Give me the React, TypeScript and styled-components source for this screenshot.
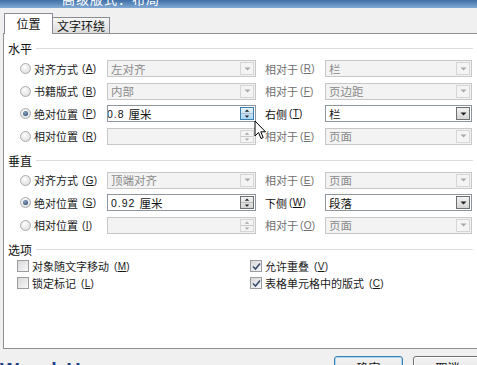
import React from "react";
import styled, { createGlobalStyle, css } from "styled-components";

const GlobalStyle = createGlobalStyle`
  html, body {
    margin: 0;
    padding: 0;
    background: #f0f0f0;
  }
  body {
    font-family: "Noto Sans CJK SC", "Liberation Sans", sans-serif;
    font-size: 11px;
    color: #1e1e1e;
  }
`;

const Window = styled.div`
  position: relative;
  width: 477px;
  height: 365px;
  overflow: hidden;
  background: #f0f0f0;
  display: flex;
  flex-direction: column;
`;

const TitleBar = styled.div`
  flex: none;
  height: 8px;
  overflow: hidden;
  background: linear-gradient(#3f6fa6, #80a9d4);
`;

const TitleText = styled.div`
  margin-top: -9px;
  padding-left: 62px;
  color: #fff;
  font-size: 13px;
  line-height: 16px;
  letter-spacing: 1px;
`;

const TabStrip = styled.div`
  flex: none;
  height: 25px;
  display: flex;
  align-items: flex-end;
  padding-left: 4px;
`;

const Tab = styled.div<{ $active?: boolean }>`
  box-sizing: border-box;
  display: flex;
  align-items: center;
  justify-content: center;
  border: 1px solid #898c95;
  border-bottom: none;
  font-size: 12px;
  color: #111;
  ${(p) =>
    p.$active
      ? css`
          width: 49px;
          height: 21px;
          margin-bottom: -1px;
          background: #fff;
          position: relative;
          z-index: 1;
          padding-bottom: 2px;
        `
      : css`
          width: 57px;
          height: 16px;
          border-left: none;
          background: linear-gradient(#f6f6f6, #dcdcdc);
        `}
`;

const Panel = styled.div`
  flex: none;
  box-sizing: border-box;
  height: 316px;
  margin: 0 0 0 3px;
  background: #fff;
  border: 1px solid #8e9094;
  border-right: none;
  padding: 8px 4px 0 4px;
`;

const SectionHeader = styled.div<{ $gap?: number }>`
  display: flex;
  align-items: center;
  gap: 4px;
  height: 12px;
  margin-top: ${(p) => p.$gap ?? 0}px;
  font-size: 12px;
  color: #111;

  &::after {
    content: "";
    flex: 1;
    height: 1px;
    background: #dcdcdc;
  }
`;

const Rows = styled.div<{ $top?: number }>`
  display: grid;
  grid-template-columns: 90px 149px 69px 147px;
  grid-auto-rows: 17px;
  row-gap: 5.5px;
  margin: ${(p) => p.$top ?? 6}px 0 0 9px;
`;

const RadioCell = styled.label`
  display: flex;
  align-items: center;
  gap: 2px;
  padding-left: 3px;
  white-space: nowrap;
  color: #1a1a1a;
  font-size: 11px;
`;

const Radio = styled.span<{ $on?: boolean }>`
  flex: none;
  box-sizing: border-box;
  width: 11px;
  height: 11px;
  border-radius: 50%;
  border: 1px solid #a9abae;
  background: radial-gradient(circle at 40% 35%, #ffffff, #d6d6d6);
  display: flex;
  align-items: center;
  justify-content: center;
  margin-right: 1px;

  &::after {
    content: "";
    display: ${(p) => (p.$on ? "block" : "none")};
    width: 5px;
    height: 5px;
    border-radius: 50%;
    background: radial-gradient(circle at 40% 35%, #8aa6c4, #1f3d62);
  }
`;

const Key = styled.span`
  font-family: "Liberation Sans", sans-serif;
  font-size: 10px;
  margin-left: 2px;
  letter-spacing: 0.3px;

  u {
    text-decoration: underline;
  }
`;

const SideLabel = styled.span<{ $dim?: boolean }>`
  display: flex;
  align-items: center;
  padding-left: 9px;
  white-space: nowrap;
  font-size: 11px;
  color: ${(p) => (p.$dim ? "#6e6e6e" : "#111")};
`;

const Field = styled.div<{ $dim?: boolean }>`
  box-sizing: border-box;
  display: flex;
  align-items: stretch;
  height: 17px;
  border: 1px solid ${(p) => (p.$dim ? "#c7c7c7" : "#8f959c")};
  background: ${(p) => (p.$dim ? "#f3f3f3" : "#fff")};
  overflow: hidden;
`;

const FieldText = styled.div<{ $dim?: boolean; $shift?: number }>`
  flex: 1;
  display: flex;
  align-items: center;
  padding-left: 3px;
  font-size: 11.5px;
  white-space: nowrap;
  overflow: hidden;
  color: ${(p) => (p.$dim ? "#8a8a8a" : "#111")};

  & > :first-child {
    margin-left: ${(p) => -(p.$shift ?? 0)}px;
  }
`;

const Num = styled.span`
  font-family: "Liberation Sans", sans-serif;
  font-size: 10.5px;
  margin-right: 4px;
  letter-spacing: 1px;
`;

const SideButton = styled.div<{ $dim?: boolean; $hot?: boolean }>`
  flex: none;
  box-sizing: border-box;
  width: 14px;
  margin: 1px;
  display: flex;
  flex-direction: column;
  align-items: center;
  justify-content: center;
  border: 1px solid ${(p) => (p.$hot ? "#3c7fb1" : p.$dim ? "#d6d6d6" : "#707070")};
  background: ${(p) =>
    p.$hot
      ? "linear-gradient(#e8f4fc, #a9d5f3)"
      : p.$dim
      ? "#f4f4f4"
      : "linear-gradient(#f2f2f2, #d4d4d4)"};
  color: ${(p) => (p.$dim ? "#a8a8a8" : "#222")};
`;

const SpinHalf = styled.div`
  flex: 1;
  width: 100%;
  display: flex;
  align-items: center;
  justify-content: center;
  & + & {
    border-top: 1px solid rgba(120, 120, 120, 0.35);
  }
`;

const Arrow = ({ up, size = 5 }: { up?: boolean; size?: number }) => (
  <svg width={size + 2} height={Math.ceil(size / 2) + 1} viewBox="0 0 7 4">
    <path d={up ? "M0.5 3.5 L3.5 0.5 L6.5 3.5 Z" : "M0.5 0.5 L6.5 0.5 L3.5 3.5 Z"} fill="currentColor" />
  </svg>
);

type ComboProps = {
  text?: React.ReactNode;
  dim?: boolean;
  spin?: boolean;
  hot?: boolean;
  shift?: number;
};

const Combo = ({ text, dim, spin, hot, shift }: ComboProps) => (
  <Field $dim={dim}>
    <FieldText $dim={dim} $shift={shift}>
      {text}
    </FieldText>
    <SideButton $dim={dim} $hot={hot}>
      {spin ? (
        <>
          <SpinHalf>
            <Arrow up size={4} />
          </SpinHalf>
          <SpinHalf>
            <Arrow size={4} />
          </SpinHalf>
        </>
      ) : (
        <Arrow />
      )}
    </SideButton>
  </Field>
);

const Label = ({ text, k }: { text: string; k: string }) => (
  <>
    {text}
    <Key>
      (<u>{k}</u>)
    </Key>
  </>
);

const Checks = styled.div`
  display: grid;
  grid-template-columns: 233px 1fr;
  grid-auto-rows: 17px;
  margin: 2.5px 0 0 9px;
`;

const CheckCell = styled.label`
  display: flex;
  align-items: center;
  gap: 3px;
  white-space: nowrap;
  font-size: 11px;
  color: #1a1a1a;
`;

const Box = styled.span`
  flex: none;
  box-sizing: border-box;
  width: 12px;
  height: 12px;
  border: 1px solid #9a9ca0;
  background: linear-gradient(135deg, #d8d8d8, #f8f8f8);
  display: flex;
  align-items: center;
  justify-content: center;
`;

const Check = ({ on, children }: { on?: boolean; children: React.ReactNode }) => (
  <CheckCell>
    <Box>
      {on && (
        <svg width="9" height="9" viewBox="0 0 9 9">
          <path d="M1 4.5 L3.5 7 L8 1.5" stroke="#3a4f6e" strokeWidth="1.6" fill="none" />
        </svg>
      )}
    </Box>
    {children}
  </CheckCell>
);

const Footer = styled.div`
  flex: none;
  display: flex;
  align-items: flex-start;
  padding-top: 7px;
`;

const Watermark = styled.div`
  font-family: "Liberation Sans", sans-serif;
  font-weight: bold;
  font-size: 20px;
  line-height: 20px;
  margin-top: 4px;
  color: #1d3f8c;
  letter-spacing: 2px;
  flex: 1;
`;

const DialogButton = styled.button<{ $default?: boolean }>`
  box-sizing: border-box;
  width: 69px;
  height: 23px;
  margin-left: 10px;
  border-radius: 3px;
  border: 1px solid ${(p) => (p.$default ? "#3c7fb1" : "#707070")};
  box-shadow: ${(p) => (p.$default ? "inset 0 0 0 1px #a7d7f5" : "inset 0 0 0 1px #fcfcfc")};
  background: linear-gradient(#f2f2f2 0%, #ebebeb 45%, #dddddd 50%, #cfcfcf 100%);
  font-family: "Noto Sans CJK SC", sans-serif;
  font-size: 12px;
  color: #111;
  padding: 0;
  &:last-child {
    margin-right: -5px;
  }
`;

const Cursor = styled.svg`
  position: absolute;
  left: 254px;
  top: 120px;
`;

export default function App() {
  return (
    <Window>
      <GlobalStyle />
      <TitleBar>
        <TitleText>高级版式：布局</TitleText>
      </TitleBar>
      <TabStrip>
        <Tab $active>位置</Tab>
        <Tab>文字环绕</Tab>
      </TabStrip>
      <Panel>
        <SectionHeader>水平</SectionHeader>
        <Rows>
          <RadioCell>
            <Radio />
            <Label text="对齐方式" k="A" />
          </RadioCell>
          <Combo text="左对齐" dim />
          <SideLabel $dim>
            <Label text="相对于" k="R" />
          </SideLabel>
          <Combo text="栏" dim />

          <RadioCell>
            <Radio />
            <Label text="书籍版式" k="B" />
          </RadioCell>
          <Combo text="内部" dim />
          <SideLabel $dim>
            <Label text="相对于" k="F" />
          </SideLabel>
          <Combo text="页边距" dim />

          <RadioCell>
            <Radio $on />
            <Label text="绝对位置" k="P" />
          </RadioCell>
          <Combo
            text={
              <>
                <Num>0.8</Num>厘米
              </>
            }
            spin
            hot
            shift={4}
          />
          <SideLabel>
            <Label text="右侧" k="T" />
          </SideLabel>
          <Combo text="栏" />

          <RadioCell>
            <Radio />
            <Label text="相对位置" k="R" />
          </RadioCell>
          <Combo dim spin />
          <SideLabel $dim>
            <Label text="相对于" k="E" />
          </SideLabel>
          <Combo text="页面" dim />
        </Rows>

        <SectionHeader $gap={9.5}>垂直</SectionHeader>
        <Rows $top={5.5}>
          <RadioCell>
            <Radio />
            <Label text="对齐方式" k="G" />
          </RadioCell>
          <Combo text="顶端对齐" dim />
          <SideLabel $dim>
            <Label text="相对于" k="E" />
          </SideLabel>
          <Combo text="页面" dim />

          <RadioCell>
            <Radio $on />
            <Label text="绝对位置" k="S" />
          </RadioCell>
          <Combo
            text={
              <>
                <Num>0.92</Num>厘米
              </>
            }
            spin
          />
          <SideLabel>
            <Label text="下侧" k="W" />
          </SideLabel>
          <Combo text="段落" />

          <RadioCell>
            <Radio />
            <Label text="相对位置" k="I" />
          </RadioCell>
          <Combo dim spin />
          <SideLabel $dim>
            <Label text="相对于" k="O" />
          </SideLabel>
          <Combo text="页面" dim />
        </Rows>

        <SectionHeader $gap={9.5}>选项</SectionHeader>
        <Checks>
          <Check>
            <Label text="对象随文字移动" k="M" />
          </Check>
          <Check on>
            <Label text="允许重叠" k="V" />
          </Check>
          <Check>
            <Label text="锁定标记" k="L" />
          </Check>
          <Check on>
            <Label text="表格单元格中的版式" k="C" />
          </Check>
        </Checks>
      </Panel>
      <Footer>
        <Watermark>Word Home</Watermark>
        <DialogButton $default>确定</DialogButton>
        <DialogButton>取消</DialogButton>
      </Footer>
      <Cursor width="13" height="20" viewBox="0 0 13 20">
        <path
          d="M1 1 L1 16 L4.5 12.5 L7 18.5 L9.2 17.6 L6.8 11.8 L11.5 11.8 Z"
          fill="#fff"
          stroke="#000"
          strokeWidth="1"
          strokeLinejoin="round"
        />
      </Cursor>
    </Window>
  );
}
